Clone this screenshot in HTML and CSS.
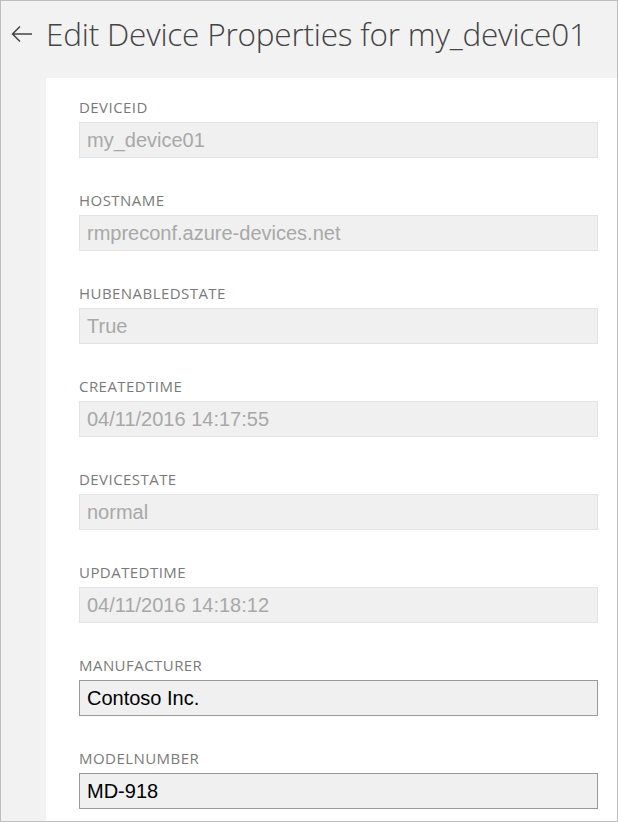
FILE: index.html
```html
<!DOCTYPE html>
<html>
<head>
<meta charset="utf-8">
<link rel="stylesheet" href="styles.css">
</head>
<body>
<div class="frame">
  <header class="header">
    <svg class="back" width="24" height="20" viewBox="0 0 24 20"><path d="M10 2.5 L2.5 10 L10 17.5 M2.5 10 H22" fill="none" stroke="#444" stroke-width="1.5"/></svg>
    <h1 class="title">Edit Device Properties for my_device01</h1>
  </header>
  <main class="panel">
    <div class="field"><div class="label">DEVICEID</div><div class="input disabled">my_device01</div></div>
    <div class="field"><div class="label">HOSTNAME</div><div class="input disabled">rmpreconf.azure-devices.net</div></div>
    <div class="field"><div class="label">HUBENABLEDSTATE</div><div class="input disabled">True</div></div>
    <div class="field"><div class="label">CREATEDTIME</div><div class="input disabled">04/11/2016 14:17:55</div></div>
    <div class="field"><div class="label">DEVICESTATE</div><div class="input disabled">normal</div></div>
    <div class="field"><div class="label">UPDATEDTIME</div><div class="input disabled">04/11/2016 14:18:12</div></div>
    <div class="field"><div class="label">MANUFACTURER</div><div class="input">Contoso Inc.</div></div>
    <div class="field"><div class="label">MODELNUMBER</div><div class="input">MD-918</div></div>
  </main>
</div>
</body>
</html>
```
FILE: styles.css
```css
html, body { margin: 0; padding: 0; background: #fff; }
.frame {
  width: 618px; height: 822px; box-sizing: border-box;
  border: 1px solid #bdbdbd; background: #f2f2f2; overflow: hidden;
  display: flex; flex-direction: column;
}
.header {
  height: 77px; display: flex; align-items: center; gap: 12px;
  padding-left: 9px; box-sizing: border-box; padding-bottom: 12px;
}
.back { flex: none; }
.title {
  margin: 0; font-family: "Open Sans", "Noto Sans", sans-serif; font-weight: 300;
  font-size: 31.5px; color: #444; letter-spacing: -0.2px; white-space: nowrap;
}
.panel {
  flex: 1; margin-left: 45px; background: #fff;
  padding: 19px 19px 0 33px;
  display: flex; flex-direction: column; gap: 32px;
}
.label {
  font-family: "Open Sans", "Noto Sans", sans-serif; font-size: 15px; line-height: 20px;
  letter-spacing: 0.45px; color: #7a7a7a; margin-bottom: 5px;
}
.input {
  height: 36px; box-sizing: border-box; border: 1px solid #999; background: #f0f0f0;
  font-family: "Liberation Sans", Arial, sans-serif; font-size: 20px; line-height: 34px;
  padding-left: 7px; color: #000;
}
.input.disabled { border-color: #e3e3e3; color: #a8a8a8; }
```
